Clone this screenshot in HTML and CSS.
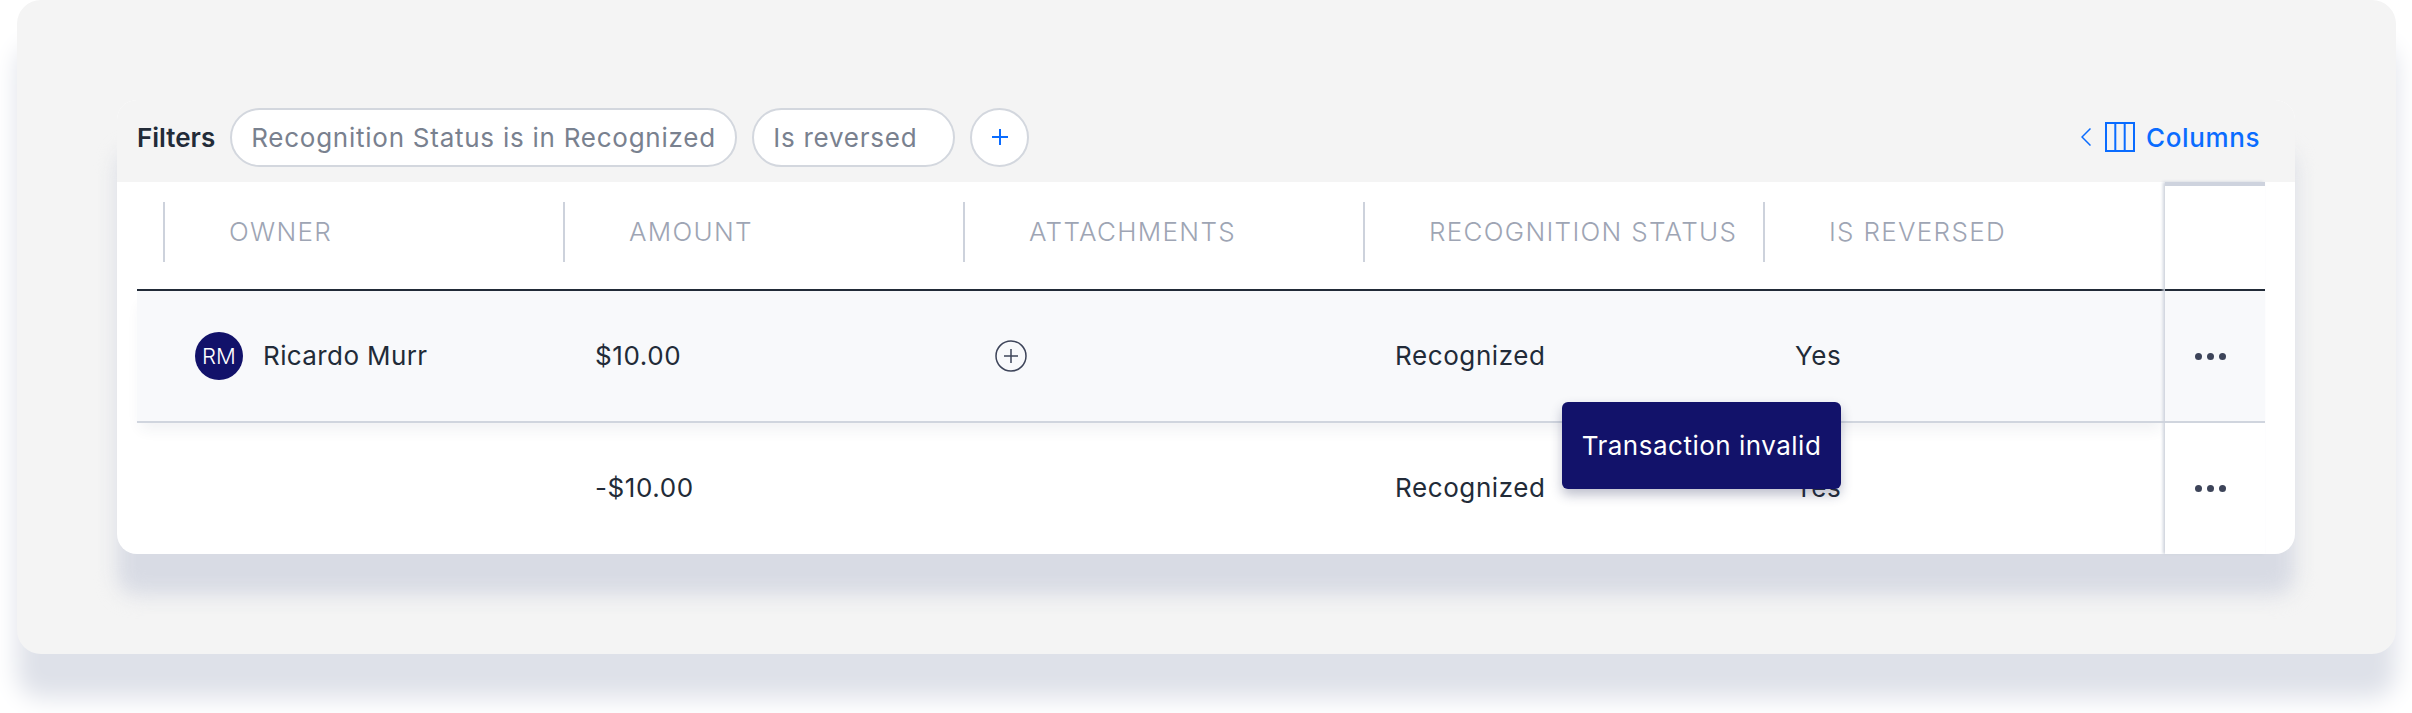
FILE: index.html
```html
<!DOCTYPE html>
<html lang="en">
<head>
<meta charset="utf-8">
<title>Transactions</title>
<link rel="stylesheet" href="styles.css">
</head>
<body>
<div class="panel">
  <div class="card">
    <div class="filters">
      <span class="filters-label">Filters</span>
      <span class="pill pill-status">Recognition Status is in Recognized</span>
      <span class="pill pill-reversed">Is reversed</span>
      <span class="add">
        <svg width="18" height="18" viewBox="0 0 18 18"><path d="M9 1v16M1 9h16" fill="none" stroke="#0a6cff" stroke-width="2"/></svg>
      </span>
      <span class="columns">
        <svg class="chev" width="10" height="18" viewBox="0 0 10 18"><path d="M9.500 0.500L1 9l8.500 8.500" fill="none" stroke="#0a6cff" stroke-width="1.500"/></svg>
        <svg width="30" height="30" viewBox="0 0 30 30"><path d="M1 1h28v28H1zM10.300 1v28M19.700 1v28" fill="none" stroke="#0a6cff" stroke-width="2"/></svg>
        <span class="columns-text">Columns</span>
      </span>
    </div>
    <div class="table">
      <div class="main">
        <div class="row head">
          <div class="spacer"></div>
          <div class="th"><span class="rule"></span>OWNER</div>
          <div class="th"><span class="rule"></span>AMOUNT</div>
          <div class="th"><span class="rule"></span>ATTACHMENTS</div>
          <div class="th"><span class="rule"></span>RECOGNITION STATUS</div>
          <div class="th"><span class="rule"></span>IS REVERSED</div>
        </div>
        <div class="row body first">
          <div class="spacer"></div>
          <div class="td owner"><span class="avatar">RM</span><span class="txt">Ricardo Murr</span></div>
          <div class="td"><span class="txt">$10.00</span></div>
          <div class="td">
            <svg width="32" height="32" viewBox="0 0 32 32"><circle cx="16" cy="16" r="15" fill="none" stroke="#3d4459" stroke-width="1.500"/><path d="M16 9v14M9 16h14" fill="none" stroke="#3d4459" stroke-width="1.500"/></svg>
          </div>
          <div class="td"><span class="txt">Recognized</span></div>
          <div class="td"><span class="txt">Yes</span></div>
        </div>
        <div class="row body second">
          <div class="spacer"></div>
          <div class="td"></div>
          <div class="td"><span class="txt">-$10.00</span></div>
          <div class="td"></div>
          <div class="td"><span class="txt">Recognized</span></div>
          <div class="td"><span class="txt">Yes</span></div>
        </div>
      </div>
      <div class="sticky">
        <div class="sticky-head"></div>
        <div class="sticky-cell first"><span class="dots"><i></i><i></i><i></i></span></div>
        <div class="sticky-cell second"><span class="dots"><i></i><i></i><i></i></span></div>
      </div>
      <div class="tooltip">Transaction invalid</div>
    </div>
  </div>
</div>
</body>
</html>
```
FILE: styles.css
```css
* { box-sizing: border-box; }
html, body { margin: 0; background: #fff; }
body {
  width: 2412px;
  height: 713px;
  overflow: hidden;
  font-family: "Inter", "Liberation Sans", sans-serif;
  color: #222b38;
}
.panel {
  isolation: isolate;
  margin-left: 17px;
  width: 2379px;
  height: 654px;
  padding: 100px 0 0 100px;
  background: #f4f4f4;
  border-radius: 24px;
  box-shadow: 0 44px 24px 0 #dee1e9;
}
.card {
  position: relative;
  width: 2178px;
  height: 454px;
  background: #fff;
  border-radius: 20px;
}
.card::before {
  content: "";
  position: absolute;
  z-index: -1;
  top: 50px;
  left: 0;
  right: 0;
  bottom: -41px;
  border-radius: 20px;
  background: #d8dbe4;
  filter: blur(10px);
}
.filters {
  height: 82px;
  display: flex;
  align-items: center;
  padding: 0 35px 8px 20px;
  background: #f4f4f4;
  border-radius: 20px 20px 0 0;
}
.filters-label { font-size: 26px; font-weight: 600; margin-right: 15px; }
.pill {
  height: 59px;
  display: flex;
  align-items: center;
  margin-right: 15px;
  background: #fff;
  border: 2px solid #d3d7de;
  border-radius: 30px;
  font-size: 26px;
  letter-spacing: 0.75px;
  color: #79818f;
  padding-left: 19px;
}
.pill-status { width: 507px; }
.pill-reversed { width: 203px; }
.add {
  width: 59px;
  height: 59px;
  display: flex;
  align-items: center;
  justify-content: center;
  background: #fff;
  border: 2px solid #d3d7de;
  border-radius: 50%;
}
.columns {
  margin-left: auto;
  display: flex;
  align-items: center;
  color: #0a6cff;
  font-size: 26px;
  font-weight: 500;
  letter-spacing: 0.6px;
}
.chev { margin-right: 14px; }
.columns-text { margin-left: 11px; }
.table {
  position: relative;
  display: flex;
  margin-left: 20px;
  width: 2128px;
}
.main { width: 2028px; }
.row { display: grid; grid-template-columns: 27px repeat(5, 400px); }
.head { height: 109px; border-bottom: 2px solid #222b38; }
.th {
  position: relative;
  padding: 34px 0 0 65px;
  font-size: 26px;
  line-height: 32px;
  font-weight: 300;
  letter-spacing: 1.3px;
  color: #9ea5b4;
}
.rule {
  position: absolute;
  left: -1px;
  top: 20px;
  width: 2px;
  height: 60px;
  background: #cdd2dc;
}
.body { align-items: center; font-size: 26px; letter-spacing: 0.6px; }
.first {
  height: 132px;
  background: #f8f9fb;
  border-bottom: 2px solid #d0d5de;
  box-shadow: 0 10px 14px -4px rgba(40, 50, 80, 0.07);
  position: relative;
}
.second { height: 131px; }
.td { padding-left: 31px; display: flex; align-items: center; }
.owner { letter-spacing: 0.4px; }
.txt { margin-bottom: 2px; }
.avatar {
  width: 48px;
  height: 48px;
  margin-right: 20px;
  display: flex;
  align-items: center;
  justify-content: center;
  border-radius: 50%;
  background: #12126a;
  color: #fff;
  font-size: 22px;
  font-weight: 300;
  letter-spacing: 0;
}
.sticky {
  width: 100px;
  position: relative;
  box-shadow: -2px 0 3px 0 #cdd2dc;
}
.sticky-head {
  height: 109px;
  background: #fff;
  border-top: 4px solid #ced3de;
  border-bottom: 2px solid #222b38;
}
.sticky-cell { display: flex; align-items: center; justify-content: center; padding-right: 10px; }
.sticky-cell.first { box-shadow: none; background: #f8f9fb; border-bottom: 2px solid #d0d5de; }
.sticky-cell.second { height: 131px; background: #fff; }
.dots { display: flex; gap: 5px; }
.dots i { width: 7px; height: 7px; border-radius: 50%; background: #3d4459; }
.tooltip {
  position: absolute;
  left: 1425px;
  top: 220px;
  width: 279px;
  height: 87px;
  display: flex;
  align-items: center;
  justify-content: center;
  background: #12126a;
  color: #fff;
  font-size: 26px;
  letter-spacing: 0.5px;
  border-radius: 6px;
  box-shadow: 0 6px 12px rgba(40, 45, 90, 0.3);
}
```
